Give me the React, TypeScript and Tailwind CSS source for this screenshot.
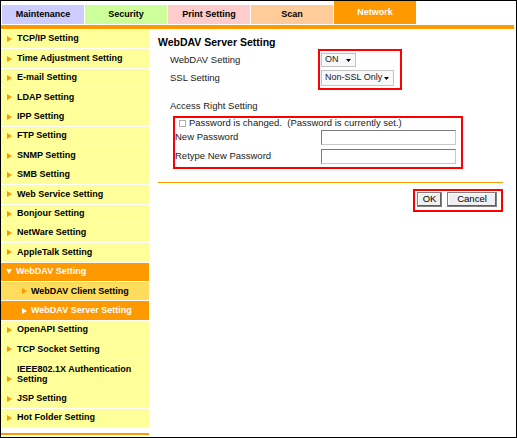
import React from "react";

type NavItem = {
  label: string;
  kind?: "open" | "sub" | "subActive";
  second?: string;
};

const navItems: NavItem[] = [
  { label: "TCP/IP Setting" },
  { label: "Time Adjustment Setting" },
  { label: "E-mail Setting" },
  { label: "LDAP Setting" },
  { label: "IPP Setting" },
  { label: "FTP Setting" },
  { label: "SNMP Setting" },
  { label: "SMB Setting" },
  { label: "Web Service Setting" },
  { label: "Bonjour Setting" },
  { label: "NetWare Setting" },
  { label: "AppleTalk Setting" },
  { label: "WebDAV Setting", kind: "open" },
  { label: "WebDAV Client Setting", kind: "sub" },
  { label: "WebDAV Server Setting", kind: "subActive" },
  { label: "OpenAPI Setting" },
  { label: "TCP Socket Setting" },
  { label: "IEEE802.1X Authentication", second: "Setting" },
  { label: "JSP Setting" },
  { label: "Hot Folder Setting" },
];

const tabs = [
  { label: "Maintenance", cls: "bg-[#ccccff] h-[19px] text-black" },
  { label: "Security", cls: "bg-[#ccff99] h-[19px] text-black" },
  { label: "Print Setting", cls: "bg-[#ffcccc] h-[19px] text-black" },
  { label: "Scan", cls: "bg-[#ffcc99] h-[19px] text-black" },
  { label: "Network", cls: "bg-[#ff9900] h-[23px] text-white" },
];

function Arrow({ color, down }: { color: string; down?: boolean }) {
  if (down) {
    return (
      <svg width="6" height="5" viewBox="0 0 6 5" className="shrink-0">
        <polygon points="0,0 6,0 3,5" fill={color} />
      </svg>
    );
  }
  return (
    <svg width="5" height="6" viewBox="0 0 5 6" className="shrink-0">
      <polygon points="0,0 5,3 0,6" fill={color} />
    </svg>
  );
}

function NavRow({ item }: { item: NavItem }) {
  if (item.second) {
    return (
      <div className="flex h-[29px] flex-col justify-center bg-[#ffff99] pl-[16px] leading-[10px]">
        <span>{item.label}</span>
        <span className="relative">
          <span className="absolute left-[-10px] top-[2px]">
            <Arrow color="#ff9900" />
          </span>
          {item.second}
        </span>
      </div>
    );
  }
  if (item.kind === "open") {
    return (
      <div className="flex h-[18.4px] items-center gap-[4px] bg-[#ff9900] pl-[5px] text-white">
        <Arrow color="#ffffff" down />
        <span>{item.label}</span>
      </div>
    );
  }
  if (item.kind === "sub") {
    return (
      <div className="flex h-[18.4px] items-center gap-[4px] bg-[#ffdc5c] pl-[21px]">
        <Arrow color="#ff9900" />
        <span>{item.label}</span>
      </div>
    );
  }
  if (item.kind === "subActive") {
    return (
      <div className="flex h-[18.4px] items-center gap-[4px] bg-[#ff9900] pl-[21px] text-white">
        <Arrow color="#ffffff" />
        <span>{item.label}</span>
      </div>
    );
  }
  return (
    <div className="flex h-[18.4px] items-center gap-[5px] bg-[#ffff99] pl-[6px]">
      <Arrow color="#ff9900" />
      <span>{item.label}</span>
    </div>
  );
}

function FakeSelect({ value, w, h }: { value: string; w: string; h: string }) {
  return (
    <div
      className={`flex shrink-0 items-center justify-between whitespace-nowrap border border-[#c3c3c3] bg-[#f8f8f8] pl-[3px] pr-[4px] text-[9px] ${w} ${h}`}
    >
      <span>{value}</span>
      <svg width="5" height="3" viewBox="0 0 5 3" className="shrink-0">
        <polygon points="0,0 5,0 2.5,3" fill="#000" />
      </svg>
    </div>
  );
}

function TextBox() {
  return (
    <div className="h-[15px] w-[135px] shrink-0 border border-t-[#7a7a7a] border-l-[#7a7a7a] border-b-[#c8c8c8] border-r-[#c8c8c8] bg-white" />
  );
}

function Btn({ label, w }: { label: string; w: string }) {
  return (
    <button
      className={`flex h-[15px] items-center justify-center border border-[#808080] bg-[#f0f0f0] shadow-[inset_-1px_-1px_0_#606060,inset_1px_1px_0_#ffffff] text-black ${w}`}
    >
      {label}
    </button>
  );
}

export default function App() {
  return (
    <div className="box-border flex h-[438px] w-[517px] flex-col overflow-hidden border border-black bg-white font-['Liberation_Sans',Arial,sans-serif]">
      {/* tabs */}
      <div className="flex h-[23px] items-end gap-[1px] pl-[1px] text-[9px] font-bold">
        {tabs.map((t) => (
          <div key={t.label} className={`flex w-[82px] items-center justify-center ${t.cls}`}>
            {t.label}
          </div>
        ))}
      </div>
      <div className="mt-[1px] h-[4px] mr-[2px] bg-[#ff9900]" />

      <div className="mt-[1px] flex flex-1">
        {/* sidebar */}
        <div className="flex w-[148px] flex-col text-[9px] font-bold text-black">
          <div className="flex flex-col gap-px">
            {navItems.map((it) => (
              <NavRow key={it.label} item={it} />
            ))}
          </div>
          <div className="mt-[6px] h-[2px] bg-[#ff9900]" />
        </div>

        {/* content */}
        <div className="ml-[9px] flex w-[345px] flex-col text-[9.5px] text-[#1a1a1a]">
          <div className="mt-[6px] text-[10.5px] font-bold leading-[12px] text-black">
            WebDAV Server Setting
          </div>

          <div className="mt-[1px] ml-[12px] flex">
            <div className="flex w-[148px] flex-col pt-[4px]">
              <div className="flex h-[14px] items-center">WebDAV Setting</div>
              <div className="mt-[3px] flex h-[16px] items-center">SSL Setting</div>
            </div>
            <div className="flex w-[84px] flex-col gap-[3px] border-2 border-[#ff0000] pb-[2px] pl-px pt-[2px]">
              <FakeSelect value="ON" w="w-[35px]" h="h-[14px]" />
              <FakeSelect value="Non-SSL Only" w="w-[73px]" h="h-[16px]" />
            </div>
          </div>

          <div className="mt-[10px] ml-[12px] leading-[12px]">Access Right Setting</div>

          <div className="mt-[4px] ml-[15px] flex w-[290px] flex-col border-2 border-[#ff0000] pb-[3px]">
            <div className="flex h-[10px] items-center gap-[3px] pl-[4px]">
              <span className="h-[7px] w-[7px] border border-[#b0b0b0] bg-white" />
              <span className="whitespace-pre">Password is changed.  (Password is currently set.)</span>
            </div>
            <div className="mt-[2px] flex h-[15px] items-center">
              <span className="w-[146px]">New Password</span>
              <TextBox />
            </div>
            <div className="mt-[4px] flex h-[15px] items-center">
              <span className="w-[146px]">Retype New Password</span>
              <TextBox />
            </div>
          </div>

          <div className="mt-[13px] h-px bg-[#ff9900]" />

          <div className="mt-[6px] flex justify-end">
            <div className="flex w-[90px] gap-[5px] border-2 border-[#ff0000] pb-[3px] pl-[2px] pt-[1px]">
              <Btn label="OK" w="w-[25px]" />
              <Btn label="Cancel" w="w-[50px]" />
            </div>
          </div>
        </div>
      </div>
    </div>
  );
}
